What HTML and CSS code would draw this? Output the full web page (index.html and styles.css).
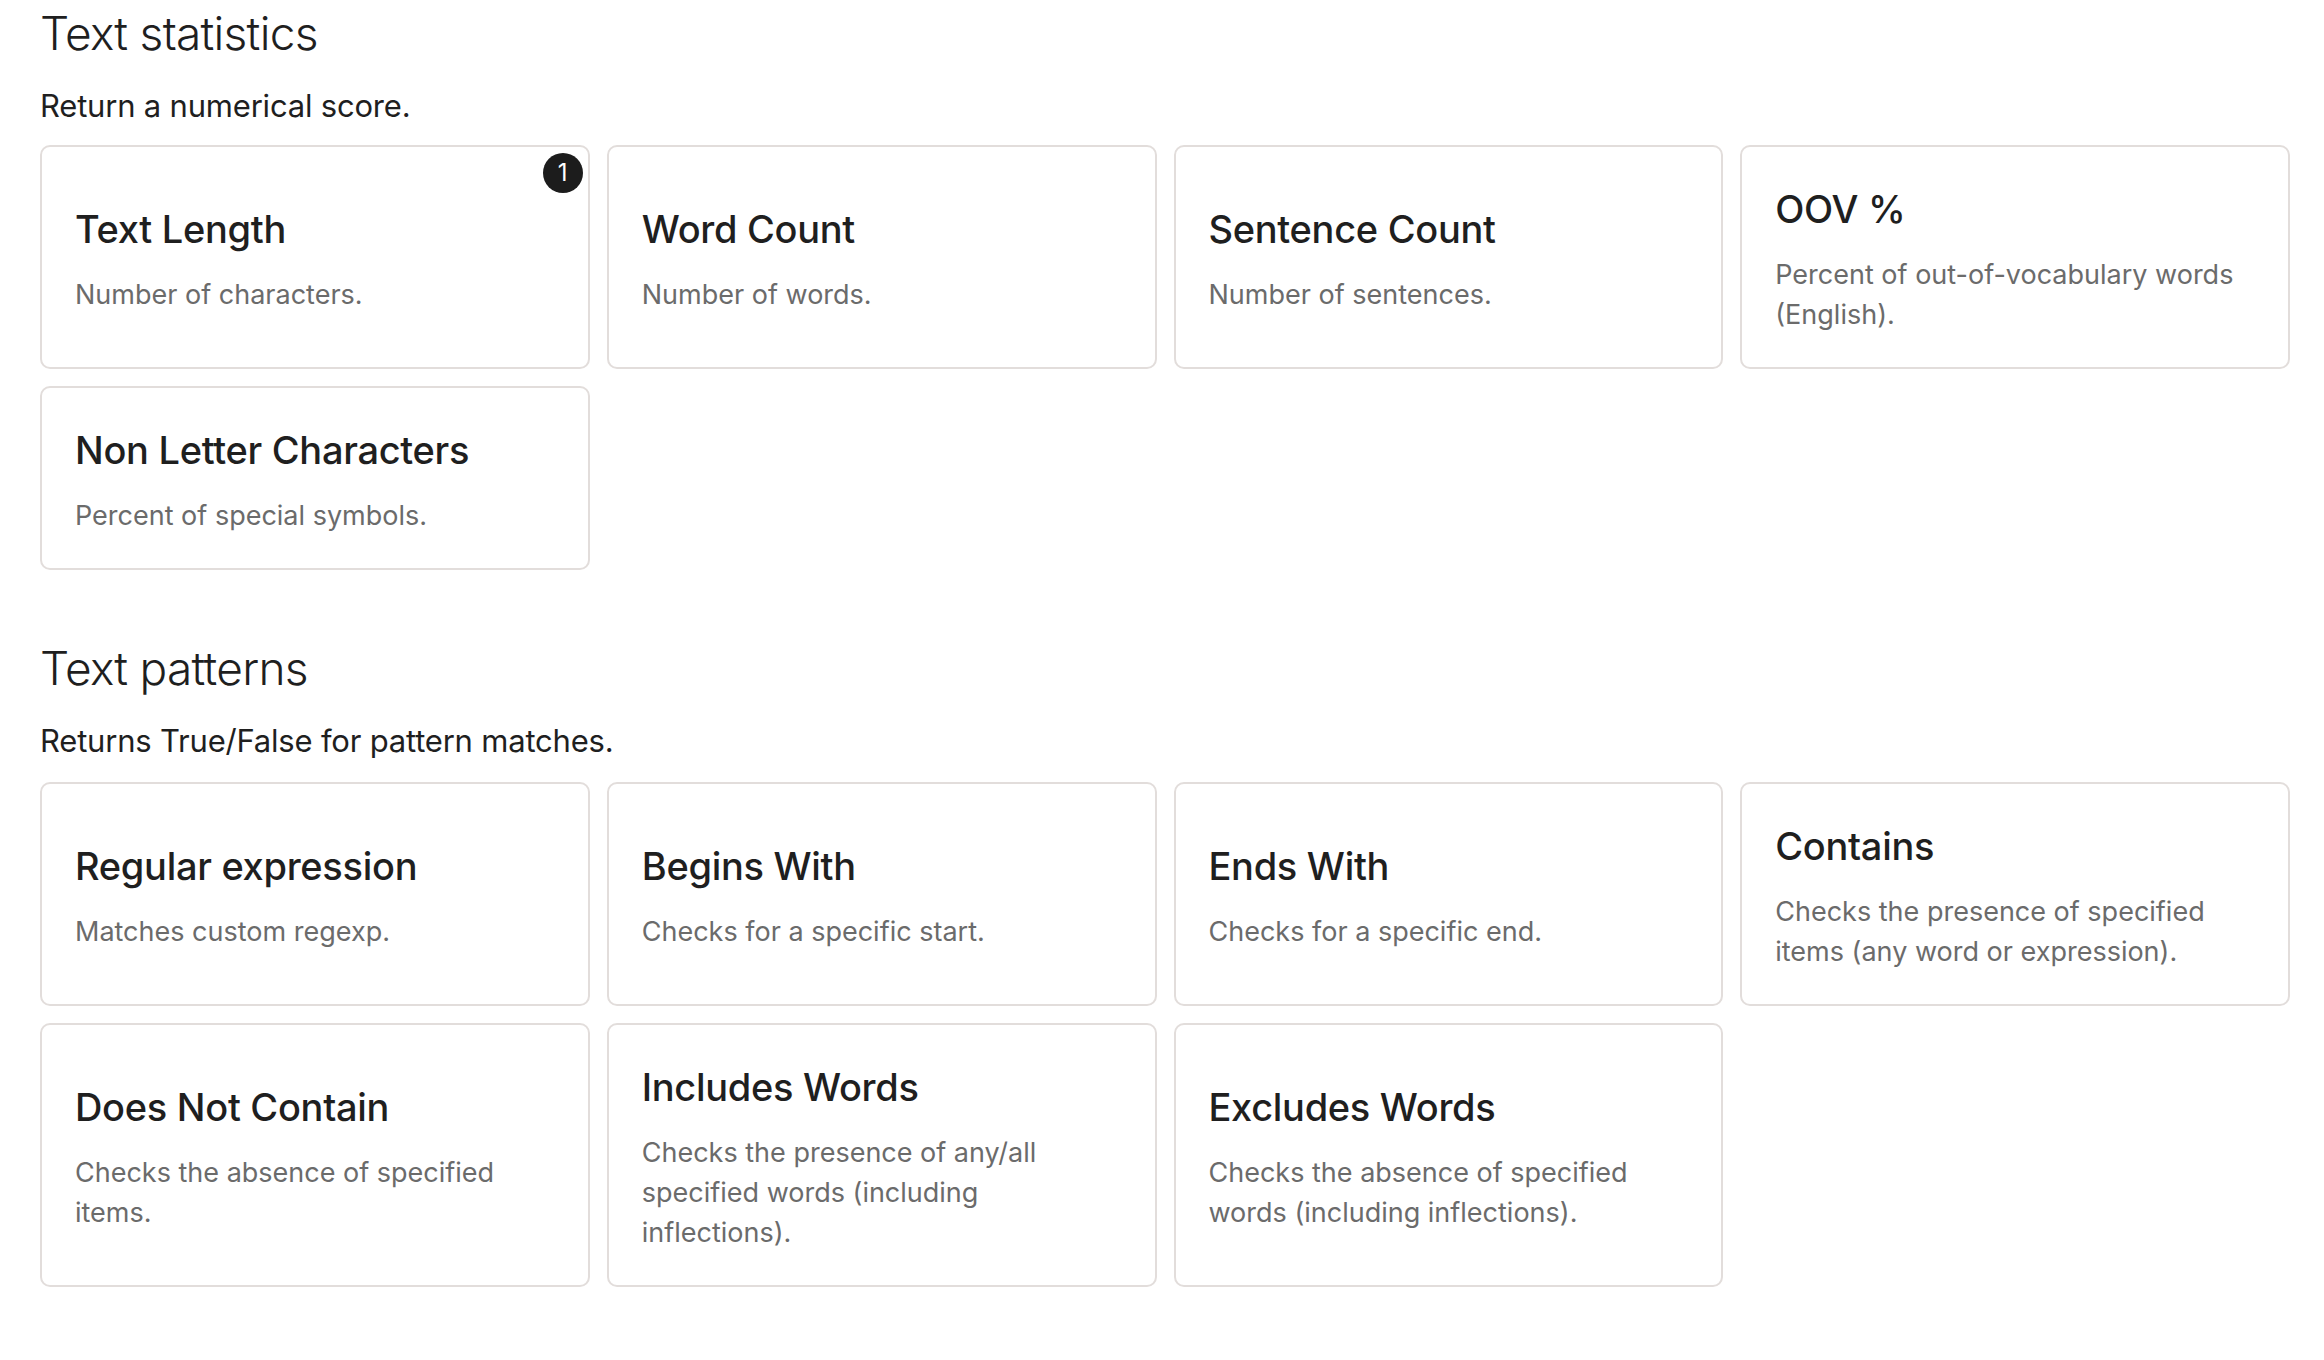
FILE: index.html
```html
<!DOCTYPE html>
<html lang="en">
<head>
<meta charset="utf-8">
<title>Text descriptors</title>
<link rel="stylesheet" href="styles.css">
</head>
<body>
<main class="page">
  <section class="group">
    <h2 class="group-title">Text statistics</h2>
    <p class="group-sub">Return a numerical score.</p>
    <div class="grid">
      <div class="card">
        <span class="badge">1</span>
        <h3 class="card-title">Text Length</h3>
        <p class="card-desc">Number of characters.</p>
      </div>
      <div class="card">
        <h3 class="card-title">Word Count</h3>
        <p class="card-desc">Number of words.</p>
      </div>
      <div class="card">
        <h3 class="card-title">Sentence Count</h3>
        <p class="card-desc">Number of sentences.</p>
      </div>
      <div class="card">
        <h3 class="card-title">OOV %</h3>
        <p class="card-desc">Percent of out-of-vocabulary words (English).</p>
      </div>
      <div class="card">
        <h3 class="card-title">Non Letter Characters</h3>
        <p class="card-desc">Percent of special symbols.</p>
      </div>
    </div>
  </section>

  <section class="group group-next">
    <h2 class="group-title">Text patterns</h2>
    <p class="group-sub">Returns True/False for pattern matches.</p>
    <div class="grid">
      <div class="card">
        <h3 class="card-title">Regular expression</h3>
        <p class="card-desc">Matches custom regexp.</p>
      </div>
      <div class="card">
        <h3 class="card-title">Begins With</h3>
        <p class="card-desc">Checks for a specific start.</p>
      </div>
      <div class="card">
        <h3 class="card-title">Ends With</h3>
        <p class="card-desc">Checks for a specific end.</p>
      </div>
      <div class="card">
        <h3 class="card-title">Contains</h3>
        <p class="card-desc">Checks the presence of specified items (any word or expression).</p>
      </div>
      <div class="card">
        <h3 class="card-title">Does Not Contain</h3>
        <p class="card-desc">Checks the absence of specified items.</p>
      </div>
      <div class="card">
        <h3 class="card-title">Includes Words</h3>
        <p class="card-desc">Checks the presence of any/all specified words (including inflections).</p>
      </div>
      <div class="card">
        <h3 class="card-title">Excludes Words</h3>
        <p class="card-desc">Checks the absence of specified words (including inflections).</p>
      </div>
    </div>
  </section>
</main>
</body>
</html>
```

FILE: styles.css
```css
html, body {
  margin: 0;
  padding: 0;
  background: #ffffff;
}

body {
  font-family: Inter, "Noto Sans", "Liberation Sans", sans-serif;
  color: #1f1f1f;
}

.page {
  width: 2250px;
  padding: 5px 0 40px 40px;
}

.group-title {
  margin: 0 0 25px 0;
  font-size: 46px;
  line-height: 56px;
  font-weight: 350;
  letter-spacing: -0.7px;
  color: #1f1f1f;
}

.group-sub {
  margin: 0 0 19px 0;
  font-size: 31px;
  line-height: 40px;
  font-weight: 400;
  letter-spacing: -0.2px;
  color: #1f1f1f;
}

.group-next {
  margin-top: 70px;
}

.group-next .group-sub {
  margin-bottom: 21px;
}

.grid {
  display: grid;
  grid-template-columns: repeat(4, 1fr);
  gap: 17px;
}

.card {
  position: relative;
  display: flex;
  flex-direction: column;
  justify-content: center;
  padding: 32px 32px 32px 33px;
  border: 2px solid #e2dddb;
  border-radius: 10px;
  background: #ffffff;
}

.card-title {
  margin: 0 0 16px 0;
  font-size: 38px;
  line-height: 60px;
  font-weight: 460;
  letter-spacing: -0.3px;
  color: #1f1f1f;
}

.card-desc {
  margin: 0;
  font-size: 27px;
  line-height: 40px;
  font-weight: 400;
  letter-spacing: 0;
  color: #6b6b6b;
  max-width: 460px;
}

.badge {
  position: absolute;
  top: 6px;
  right: 5px;
  width: 40px;
  height: 40px;
  border-radius: 50%;
  background: #1c1c1c;
  color: #ffffff;
  font-size: 24px;
  line-height: 40px;
  text-align: center;
}
```
